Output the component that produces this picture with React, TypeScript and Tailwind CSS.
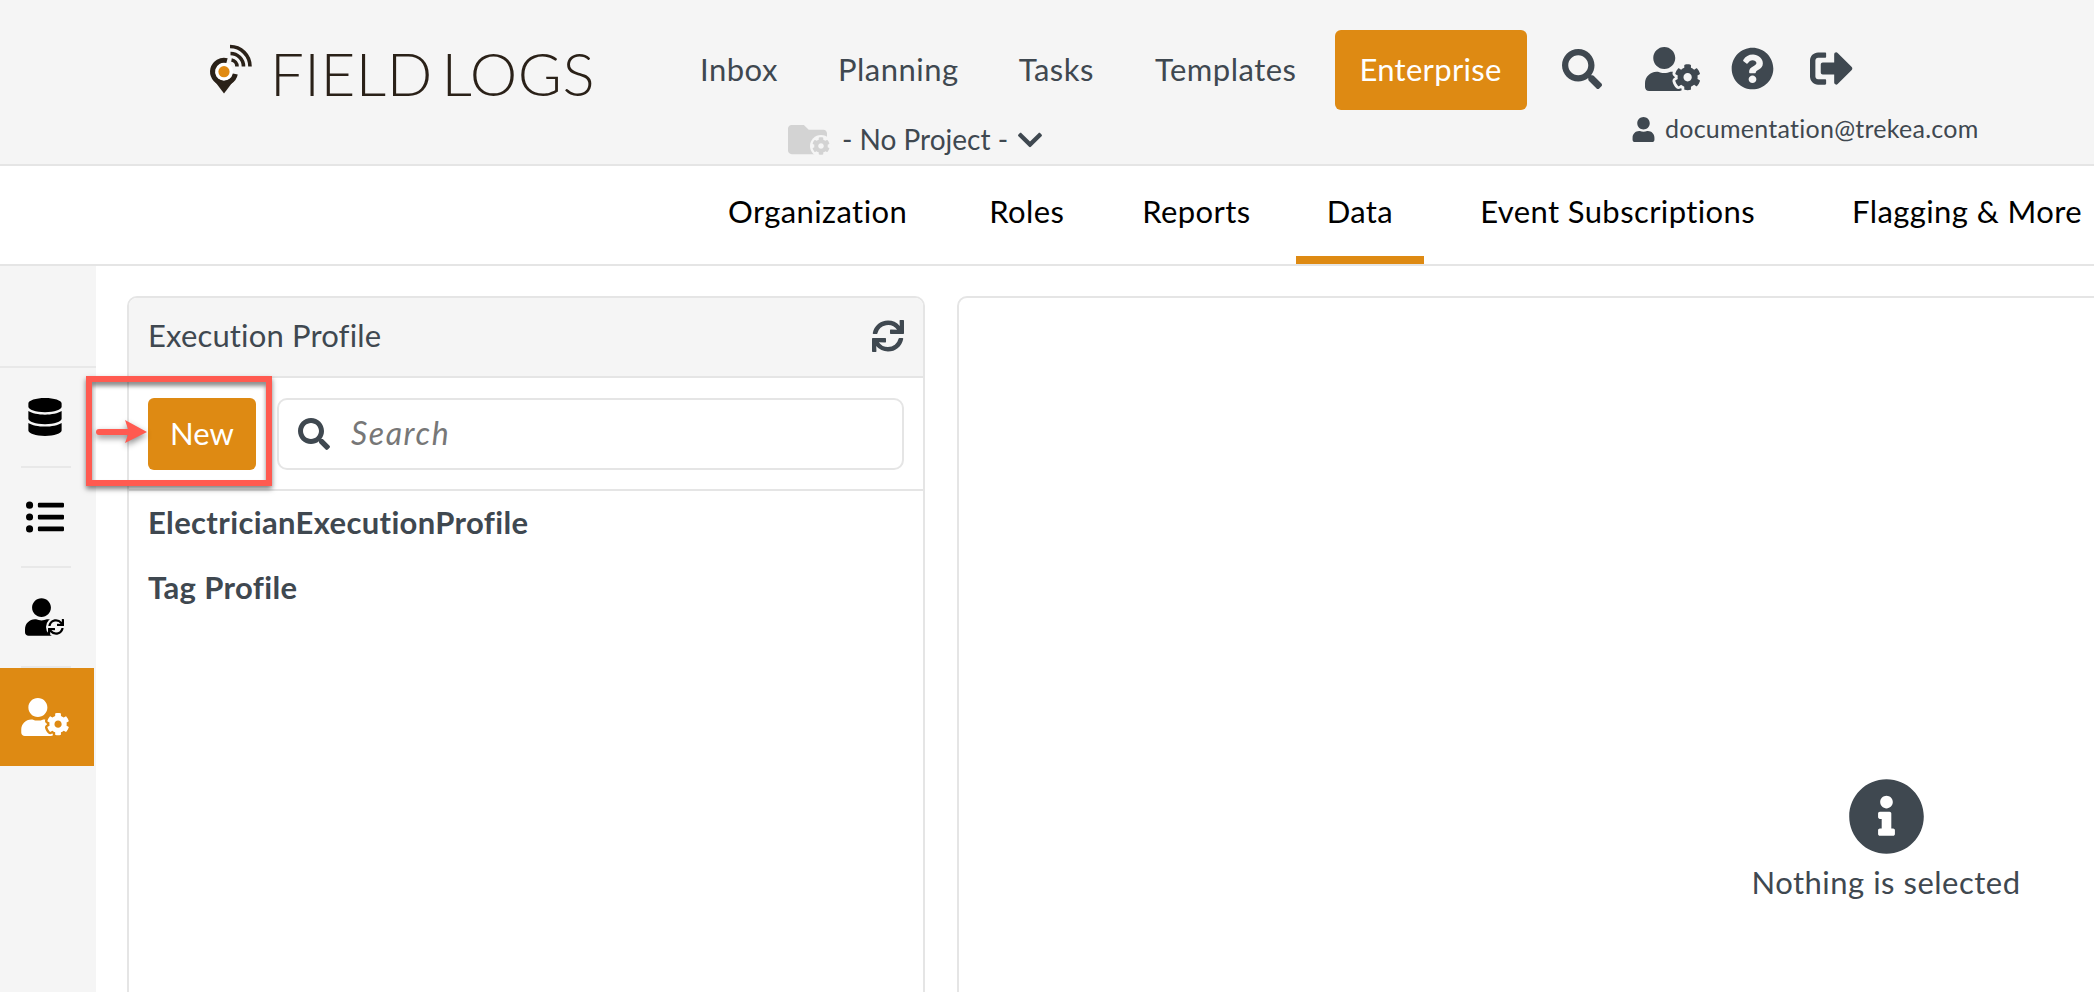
import {
  FaCog,
  FaDatabase,
  FaChevronDown,
  FaFolder,
  FaInfoCircle,
  FaListUl,
  FaQuestionCircle,
  FaSearch,
  FaSignOutAlt,
  FaSync,
  FaUser,
  FaUserCog,
} from "react-icons/fa"

const topLinks = [
  { label: "Inbox", className: "mr-[60px]" },
  { label: "Planning", className: "mr-[60px]" },
  { label: "Tasks", className: "mr-[61px]" },
  { label: "Templates", className: "mr-[38px]" },
]

const tabs = [
  { label: "Organization", className: "" },
  { label: "Roles", className: "ml-[20px]" },
  { label: "Reports", className: "ml-[16px]" },
  { label: "Data", className: "ml-[14px]" },
  { label: "Event Subscriptions", className: "ml-[25px]" },
  { label: "Flagging & More", className: "ml-[35px]" },
]

function LogoMark() {
  return (
    <svg viewBox="0 0 70 66" className="h-[66px] w-[70px] shrink-0" fill="none">
      <path d="M13 43 L35 43 L24 57.5 Z" fill="#2a2118" />
      <circle cx="24" cy="35.7" r="9.2" fill="#ffffff" />
      <path d="M27 24.6 A11.5 11.5 0 1 0 35.3 38" stroke="#2a2118" strokeWidth="5" />
      <circle cx="24" cy="35.7" r="5.6" fill="#e08a12" />
      <g stroke="#2a2118" strokeWidth="3.6">
        <path d="M30 10.5 A20 20 0 0 1 50 30.5" />
        <path d="M30.5 17.5 A13 13 0 0 1 43.5 30.5" />
        <path d="M31.5 24 A6.5 6.5 0 0 1 37 30.5" />
      </g>
    </svg>
  )
}

function FolderCog() {
  return (
    <span className="relative block h-[30px] w-[44px]">
      <FaFolder className="mt-[-5px] h-[39px] w-[39px] text-[#d3d3d3]" />
      <span className="absolute bottom-[-2px] right-0 flex h-[22px] w-[22px] items-center justify-center rounded-full bg-[#f5f5f5]">
        <FaCog className="h-[18px] w-[18px] text-[#d3d3d3]" />
      </span>
    </span>
  )
}

function UserSync() {
  return (
    <span className="relative block h-[38px] w-[41px]">
      <FaUser className="h-[38px] w-[33px] text-black" />
      <span className="absolute bottom-[-1px] right-0 flex h-[20px] w-[20px] items-center justify-center rounded-full bg-[#f5f5f5]">
        <FaSync className="h-[16px] w-[16px] text-black" />
      </span>
    </span>
  )
}

function SideDivider() {
  return <div className="ml-[21px] h-[2px] w-[50px] bg-[#e8e8e8]" />
}

export default function App() {
  return (
    <div className="relative flex h-screen flex-col overflow-hidden bg-white font-['Lato',sans-serif] text-[#3f4850]">
      {/* Top bar */}
      <header className="flex h-[166px] shrink-0 border-b-2 border-[#e5e5e5] bg-[#f5f5f5]">
        <div className="flex w-[700px] shrink-0 pl-[200px] pt-[36px]">
          <LogoMark />
          <span className="mt-[-3px] whitespace-nowrap text-[60px] font-light leading-[80px] tracking-[0.5px] text-[#2a2118] [word-spacing:-8px]">
            FIELD LOGS
          </span>
        </div>

        <div className="w-[862px] shrink-0 pt-[30px]">
          <nav className="flex h-[80px] items-center text-[31px] tracking-[0.5px]">
            {topLinks.map((l) => (
              <a key={l.label} className={`pb-[2px] ${l.className}`}>
                {l.label}
              </a>
            ))}
            <a className="flex h-[80px] w-[192px] items-center justify-center rounded-[6px] bg-[#de8a13] pb-[2px] tracking-[0.3px] text-white">
              Enterprise
            </a>
          </nav>
          <div className="ml-[88px] mt-[15px] flex h-[30px] items-center text-[28px]">
            <FolderCog />
            <span className="ml-[10px] pb-[2px]">- No Project -</span>
            <FaChevronDown className="ml-[8px] h-[28px] w-[28px]" />
          </div>
        </div>

        <div className="flex-1 pt-[46px]">
          <div className="flex h-[45px] items-center">
            <FaSearch className="h-[40px] w-[40px]" />
            <FaUserCog className="ml-[43px] h-[44px] w-[55px]" />
            <FaQuestionCircle className="ml-[31px] h-[43px] w-[43px]" />
            <FaSignOutAlt className="ml-[36px] h-[43px] w-[43px]" />
          </div>
          <div className="ml-[70px] mt-[23px] flex h-[30px] items-center text-[25px] tracking-[0.25px]">
            <FaUser className="h-[25px] w-[23px]" />
            <span className="ml-[10px] whitespace-nowrap">documentation@trekea.com</span>
          </div>
        </div>
      </header>

      {/* Section tabs */}
      <nav className="flex h-[100px] shrink-0 border-b-2 border-[#e5e5e5] bg-white pl-[697px] text-[31px] tracking-[0.4px] text-black">
        {tabs.map((t) => (
          <a
            key={t.label}
            className={`flex h-[98px] shrink-0 items-center whitespace-nowrap border-b-[8px] px-[31px] ${t.className} ${
              t.label === "Data" ? "border-[#de8a13]" : "border-transparent"
            }`}
          >
            {t.label}
          </a>
        ))}
      </nav>

      <div className="flex min-h-0 flex-1">
        {/* Side rail */}
        <aside className="w-[96px] shrink-0 bg-[#f5f5f5]">
          <div className="h-[102px] border-b-2 border-[#e8e8e8]" />
          <div className="flex h-[98px] w-[90px] items-center justify-center text-black">
            <FaDatabase className="h-[38px] w-[34px]" />
          </div>
          <SideDivider />
          <div className="flex h-[98px] w-[90px] items-center justify-center text-black">
            <FaListUl className="h-[38px] w-[38px]" />
          </div>
          <SideDivider />
          <div className="flex h-[98px] w-[90px] items-center justify-center">
            <UserSync />
          </div>
          <SideDivider />
          <div className="flex h-[98px] w-[94px] items-center justify-center bg-[#de8a13] pr-[4px] text-white">
            <FaUserCog className="h-[38px] w-[48px]" />
          </div>
        </aside>

        {/* Profile list */}
        <section className="ml-[31px] mt-[30px] h-[800px] w-[798px] shrink-0 rounded-t-[10px] border-2 border-[#e5e5e5]">
          <div className="flex h-[80px] items-center justify-between rounded-t-[8px] border-b-2 border-[#e5e5e5] bg-[#f5f5f5] pb-[3px] pl-[19px] pr-[19px] text-[31px] tracking-[0.15px]">
            <span>Execution Profile</span>
            <FaSync className="h-[32px] w-[32px]" />
          </div>
          <div className="flex h-[113px] border-b-2 border-[#e5e5e5] px-[19px] pt-[20px]">
            <button className="h-[72px] w-[108px] rounded-[6px] bg-[#de8a13] pb-[2px] text-[31px] text-white">New</button>
            <div className="ml-[21px] flex h-[72px] flex-1 items-center rounded-[10px] border-2 border-[#e5e5e5] pl-[19px]">
              <FaSearch className="h-[32px] w-[32px]" />
              <span className="ml-[21px] pb-[2px] text-[32px] italic tracking-[1.6px] text-[#777777]">Search</span>
            </div>
          </div>
          <div className="-mt-[1px] pl-[19px] text-[31px] font-bold tracking-[0.35px]">
            <div className="flex h-[65px] items-center">ElectricianExecutionProfile</div>
            <div className="flex h-[64px] items-center">Tag Profile</div>
          </div>
        </section>

        {/* Detail pane */}
        <section className="ml-[32px] mt-[30px] flex h-[800px] w-[1858px] shrink-0 flex-col items-center rounded-t-[10px] border-2 border-[#e5e5e5] pt-[480px]">
          <FaInfoCircle className="h-[77px] w-[77px]" />
          <p className="mt-[4px] text-[31px] tracking-[0.5px]">Nothing is selected</p>
        </section>
      </div>

      {/* Callout drawn over the screenshot */}
      <div className="absolute left-[86px] top-[376px] h-[110px] w-[186px] border-[6px] border-[#ff5a50] shadow-[0_3px_5px_rgba(0,0,0,0.5),inset_0_4px_4px_rgba(0,0,0,0.45)]" />
      <svg viewBox="0 0 52 28" className="absolute left-[96px] top-[418px] h-[28px] w-[52px] drop-shadow-[0_3px_3px_rgba(0,0,0,0.45)]">
        <path d="M3 14 H32" stroke="#ff5a50" strokeWidth="6" strokeLinecap="round" />
        <path d="M29 2 L51 14 L29 25 L33 14 Z" fill="#ff5a50" />
      </svg>
    </div>
  )
}
